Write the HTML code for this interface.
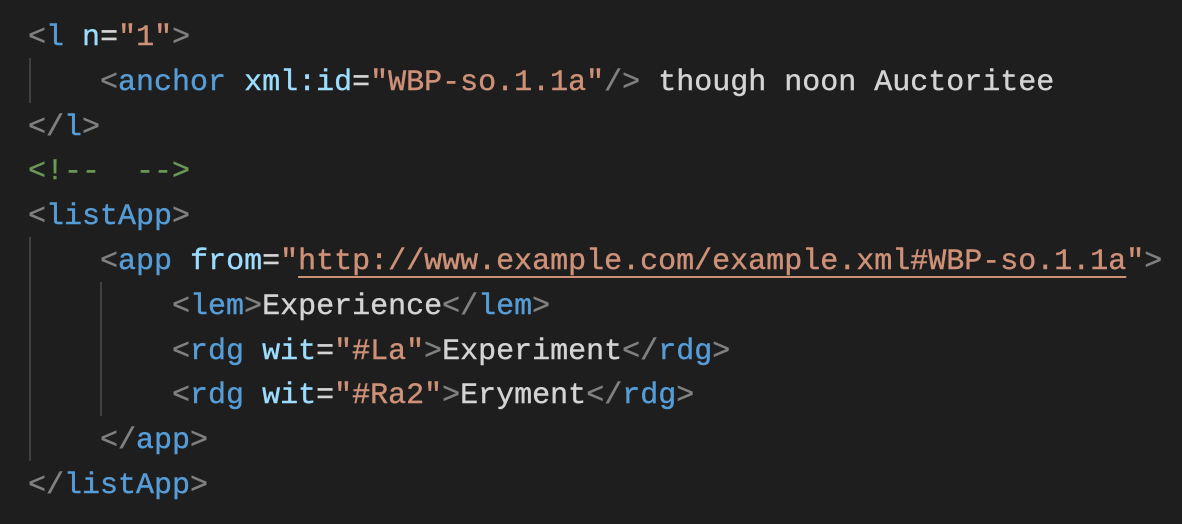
<!DOCTYPE html>
<html><head><style>
html,body{margin:0;background:#1e1e1e;width:1182px;height:524px;overflow:hidden}
pre{margin:0;position:absolute;left:28px;top:16px;font-family:"Liberation Mono",monospace;font-size:30px;line-height:44.8px;color:#d4d4d4;white-space:pre;-webkit-text-stroke:0.4px currentColor}
.p{color:#808080}.t{color:#569cd6}.a{color:#9cdcfe}.s{color:#ce9178}.c{color:#6a9955}
.u{text-decoration:underline;text-decoration-thickness:2px;text-underline-offset:7px}
.g{position:absolute;width:2px;background:#404040}
</style></head><body>
<div class="g" style="left:29px;top:58px;height:45px"></div>
<div class="g" style="left:29px;top:237px;height:224px"></div>
<div class="g" style="left:100px;top:282px;height:134px"></div>
<pre><span class="p">&lt;</span><span class="t">l</span> <span class="a">n</span>=<span class="s">"1"</span><span class="p">&gt;</span>
    <span class="p">&lt;</span><span class="t">anchor</span> <span class="a">xml:id</span>=<span class="s">"WBP-so.1.1a"</span><span class="p">/&gt;</span> though noon Auctoritee
<span class="p">&lt;/</span><span class="t">l</span><span class="p">&gt;</span>
<span class="c">&lt;!--  --&gt;</span>
<span class="p">&lt;</span><span class="t">listApp</span><span class="p">&gt;</span>
    <span class="p">&lt;</span><span class="t">app</span> <span class="a">from</span>=<span class="s">"<span class="u">http://www.example.com/example.xml#WBP-so.1.1a</span>"</span><span class="p">&gt;</span>
        <span class="p">&lt;</span><span class="t">lem</span><span class="p">&gt;</span>Experience<span class="p">&lt;/</span><span class="t">lem</span><span class="p">&gt;</span>
        <span class="p">&lt;</span><span class="t">rdg</span> <span class="a">wit</span>=<span class="s">"#La"</span><span class="p">&gt;</span>Experiment<span class="p">&lt;/</span><span class="t">rdg</span><span class="p">&gt;</span>
        <span class="p">&lt;</span><span class="t">rdg</span> <span class="a">wit</span>=<span class="s">"#Ra2"</span><span class="p">&gt;</span>Eryment<span class="p">&lt;/</span><span class="t">rdg</span><span class="p">&gt;</span>
    <span class="p">&lt;/</span><span class="t">app</span><span class="p">&gt;</span>
<span class="p">&lt;/</span><span class="t">listApp</span><span class="p">&gt;</span></pre>
</body></html>
